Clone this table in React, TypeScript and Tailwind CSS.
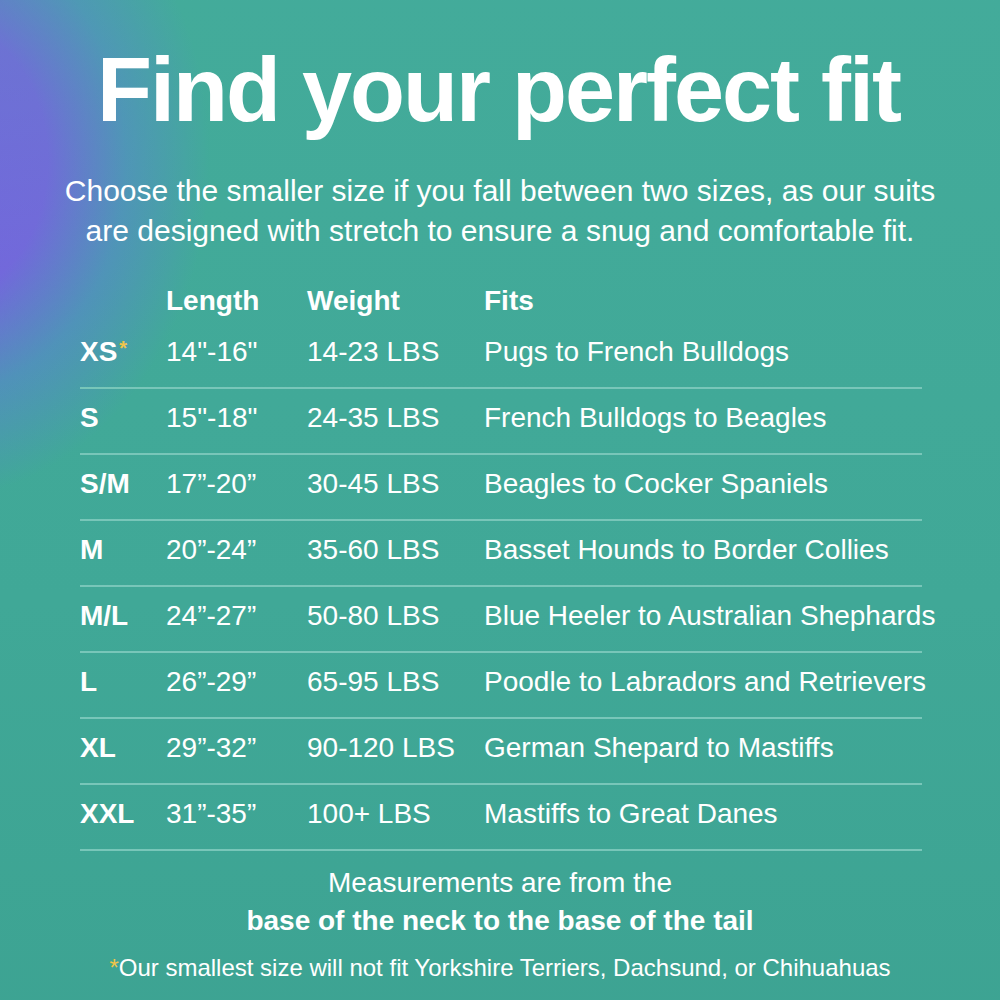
import React from 'react';

type Row = {
  size: string;
  star?: boolean;
  length: string;
  weight: string;
  fits: string;
};

const ROWS: Row[] = [
  { size: 'XS', star: true, length: '14"-16"', weight: '14-23 LBS', fits: 'Pugs to French Bulldogs' },
  { size: 'S', length: '15"-18"', weight: '24-35 LBS', fits: 'French Bulldogs to Beagles' },
  { size: 'S/M', length: '17”-20”', weight: '30-45 LBS', fits: 'Beagles to Cocker Spaniels' },
  { size: 'M', length: '20”-24”', weight: '35-60 LBS', fits: 'Basset Hounds to Border Collies' },
  { size: 'M/L', length: '24”-27”', weight: '50-80 LBS', fits: 'Blue Heeler to Australian Shephards' },
  { size: 'L', length: '26”-29”', weight: '65-95 LBS', fits: 'Poodle to Labradors and Retrievers' },
  { size: 'XL', length: '29”-32”', weight: '90-120 LBS', fits: 'German Shepard to Mastiffs' },
  { size: 'XXL', length: '31”-35”', weight: '100+ LBS', fits: 'Mastiffs to Great Danes' },
];

const SizeRow = ({ row }: { row: Row }) => {
  return (
    <div className="flex h-[66px] items-center pb-[6px] border-b-2 border-[#78c6b9] whitespace-nowrap">
      <div className="w-[86px] shrink-0 font-bold">
        {row.size}
        {row.star && (
          <span className="relative -top-[6px] ml-[2px] text-[#f0c54a] text-[20px]">*</span>
        )}
      </div>
      <div className="w-[141px] shrink-0">{row.length}</div>
      <div className="w-[177px] shrink-0">{row.weight}</div>
      <div className="shrink-0">{row.fits}</div>
    </div>
  );
};

export default function App() {
  return (
    <div className="relative w-[1000px] h-[1000px] overflow-hidden text-white bg-[#40a897] font-['Liberation_Sans',Arial,sans-serif]">
      <div className="absolute inset-0 bg-[radial-gradient(ellipse_280px_340px_at_-70px_160px,#7a58ea_0%,#7a5ae6_42%,rgba(92,124,214,0.6)_70%,rgba(64,168,151,0)_100%)]" />
      <div className="absolute inset-0 bg-[linear-gradient(180deg,rgba(74,178,162,0.3)_0%,rgba(60,162,146,0)_60%,rgba(52,150,134,0.25)_100%)]" />

      <div className="relative flex flex-col items-center">
        <h1 className="mt-[42px] ml-[-3px] text-[90px] leading-[96px] font-bold tracking-[-2px]">
          Find your perfect fit
        </h1>
        <p className="mt-[33px] text-[30px] leading-[40px] text-center">
          Choose the smaller size if you fall between two sizes, as our suits
          <br />
          are designed with stretch to ensure a snug and comfortable fit.
        </p>
      </div>

      <div className="relative ml-[80px] w-[842px] mt-[28px] text-[28px]">
        <div className="flex h-[44px] items-center font-bold">
          <div className="w-[86px] shrink-0" />
          <div className="w-[141px] shrink-0">Length</div>
          <div className="w-[177px] shrink-0">Weight</div>
          <div>Fits</div>
        </div>
        {ROWS.map((row) => (
          <SizeRow key={row.size} row={row} />
        ))}
      </div>

      <div className="relative flex flex-col items-center mt-[13px]">
        <p className="text-[28px] leading-[38px]">Measurements are from the</p>
        <p className="text-[28px] leading-[38px] font-bold">base of the neck to the base of the tail</p>
        <p className="mt-[13px] text-[24px] leading-[30px]">
          <span className="text-[#f0c54a]">*</span>Our smallest size will not fit Yorkshire Terriers, Dachsund, or Chihuahuas
        </p>
      </div>
    </div>
  );
}
